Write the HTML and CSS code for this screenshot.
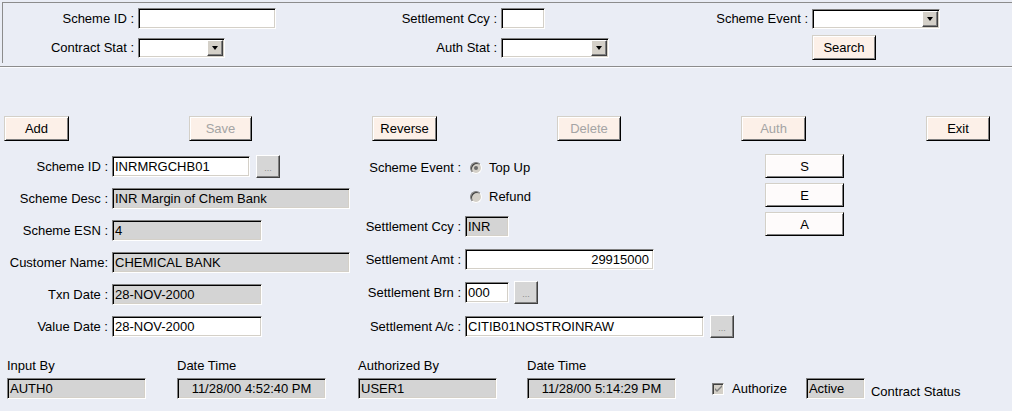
FILE: index.html
```html
<!DOCTYPE html>
<html>
<head>
<meta charset="utf-8">
<title>Margin Scheme</title>
<link rel="stylesheet" href="styles.css">
</head>
<body>
<div class="search-panel">
  <div class="sgroup g1">
    <div class="srow"><span class="slabel">Scheme ID :</span><span class="field w138"></span></div>
    <div class="srow tall"><span class="slabel">Contract Stat :</span><span class="select w87"><span class="arrow"></span></span></div>
  </div>
  <div class="sgroup g2">
    <div class="srow"><span class="slabel">Settlement Ccy :</span><span class="field w44"></span></div>
    <div class="srow tall"><span class="slabel">Auth Stat :</span><span class="select w108"><span class="arrow"></span></span></div>
  </div>
  <div class="sgroup g3">
    <div class="srow"><span class="slabel">Scheme Event :</span><span class="select w128"><span class="arrow"></span></span></div>
    <div class="srow tall"><span class="slabel"></span><span class="btn w64">Search</span></div>
  </div>
</div>
<div class="divider"></div>

<div class="actions">
  <span class="btn w65">Add</span>
  <span class="btn w63 disabled">Save</span>
  <span class="btn w65">Reverse</span>
  <span class="btn w64 disabled">Delete</span>
  <span class="btn w65 disabled">Auth</span>
  <span class="btn w64">Exit</span>
</div>

<div class="main">
  <div class="col left">
    <div class="row"><span class="label">Scheme ID :</span><span class="field w138">INRMRGCHB01</span><span class="lookup">...</span></div>
    <div class="row"><span class="label">Scheme Desc :</span><span class="field gray w238">INR Margin of Chem Bank</span></div>
    <div class="row"><span class="label">Scheme ESN :</span><span class="field gray w150">4</span></div>
    <div class="row"><span class="label">Customer Name:</span><span class="field gray w238">CHEMICAL BANK</span></div>
    <div class="row"><span class="label">Txn Date :</span><span class="field gray w150">28-NOV-2000</span></div>
    <div class="row"><span class="label">Value Date :</span><span class="field w150">28-NOV-2000</span></div>
  </div>
  <div class="col mid">
    <div class="row"><span class="label">Scheme Event :</span><span class="radio checked"></span><span class="opt">Top Up</span></div>
    <div class="row m8"><span class="label"></span><span class="radio"></span><span class="opt">Refund</span></div>
    <div class="row m9"><span class="label">Settlement Ccy :</span><span class="field gray w44">INR</span></div>
    <div class="row m12"><span class="label">Settlement Amt :</span><span class="field w189 num">29915000</span></div>
    <div class="row m12"><span class="label">Settlement Brn :</span><span class="field w44">000</span><span class="lookup">...</span></div>
    <div class="row m13"><span class="label">Settlement A/c :</span><span class="field w239">CITIB01NOSTROINRAW</span><span class="lookup l6">...</span></div>
  </div>
  <div class="col right">
    <span class="btn light w79">S</span>
    <span class="btn light w79">E</span>
    <span class="btn light w79">A</span>
  </div>
</div>

<div class="audit">
  <div class="agroup w139"><span class="alabel">Input By</span><span class="field gray">AUTH0</span></div>
  <div class="agroup w149 ml31"><span class="alabel">Date Time</span><span class="field gray center">11/28/00 4:52:40 PM</span></div>
  <div class="agroup w139 ml32"><span class="alabel">Authorized By</span><span class="field gray">USER1</span></div>
  <div class="agroup w149 ml30"><span class="alabel">Date Time</span><span class="field gray center">11/28/00 5:14:29 PM</span></div>
  <div class="authz">
    <span class="checkbox"><svg width="9" height="9" viewBox="0 0 9 9"><path d="M1 4 L3 6 L8 1 L8 3 L3 8 L1 6 Z" fill="#808080"/></svg></span>
    <span class="opt">Authorize</span>
  </div>
  <span class="field gray w59 active">Active</span>
  <span class="status">Contract Status</span>
</div>
</body>
</html>
```

FILE: styles.css
```css
* { box-sizing: border-box; }
html, body { margin: 0; padding: 0; }
body {
  width: 1012px;
  height: 411px;
  overflow: hidden;
  background: #eaedf5;
  font-family: "Liberation Sans", Arial, sans-serif;
  font-size: 13px;
  color: #000;
}

/* search panel */
.search-panel {
  margin: 2px 0 0 2px;
  height: 61px;
  border-top: 1px solid #8c8c8c;
  border-left: 1px solid #8c8c8c;
  padding-top: 5px;
  display: flex;
}
.sgroup { display: flex; flex-direction: column; gap: 6px; }
.g1 { width: 337px; }
.g2 { width: 340px; }
.g3 { flex: 1; }
.srow { display: flex; align-items: center; height: 21px; }
.srow.tall { height: 25px; }
.slabel { text-align: right; margin-right: 4px; white-space: nowrap; }
.g1 .slabel { width: 131px; }
.g2 .slabel { width: 157px; }
.g3 .slabel { width: 128px; }

.divider {
  margin-top: 3px;
  border-top: 1px solid #8c8c8c;
  border-bottom: 1px solid #fbfcff;
}

/* fields */
.field {
  display: block;
  height: 21px;
  background: #fff;
  border: 1px solid;
  border-color: #808080 #fff #fff #808080;
  box-shadow: inset 1px 1px 0 #000, inset -1px -1px 0 #d4d0c8;
  padding: 0 2px;
  line-height: 19px;
  white-space: nowrap;
  overflow: hidden;
}
.field.gray { background: #d4d4d4; }
.field.num { text-align: right; padding-right: 4px; }
.field.center { text-align: center; }

.select {
  display: flex;
  justify-content: flex-end;
  height: 20px;
  background: #fff;
  border: 1px solid;
  border-color: #808080 #fff #fff #808080;
  box-shadow: inset 1px 1px 0 #000, inset -1px -1px 0 #d4d0c8;
  padding: 1px;
}
.arrow {
  width: 16px;
  height: 100%;
  background: #d4d0c8;
  border: 1px solid;
  border-color: #fff #404040 #404040 #fff;
  box-shadow: inset -1px -1px 0 #808080;
  display: flex;
  align-items: center;
  justify-content: center;
}
.arrow::after {
  content: "";
  border-left: 3.5px solid transparent;
  border-right: 3.5px solid transparent;
  border-top: 4px solid #000;
}

/* buttons */
.btn {
  display: flex;
  align-items: center;
  justify-content: center;
  height: 25px;
  background: #fcf0e8;
  border: 1px solid;
  border-color: #d4d0c8 #000 #000 #d4d0c8;
  box-shadow: inset 1px 1px 0 #fff, inset -1px -1px 0 #808080;
  white-space: nowrap;
}
.btn.disabled { color: #a4a4a4; }
.btn.light { background: #fefbfb; height: 24px; }

.lookup {
  display: flex;
  align-items: flex-end;
  justify-content: center;
  width: 24px;
  height: 23px;
  margin-left: 5px;
  background: #d6d6d6;
  border: 1px solid;
  border-color: #fff #404040 #404040 #fff;
  box-shadow: inset -1px -1px 0 #808080;
  font-size: 9px;
  color: #8a8a8a;
  padding-bottom: 4px;
  letter-spacing: 0;
}
.lookup.l6 { margin-left: 6px; }

.actions {
  margin-top: 48px;
  padding-left: 4px;
  display: flex;
  gap: 120px;
}

/* main */
.main {
  margin-top: 13px;
  display: flex;
}
.col { display: flex; flex-direction: column; }
.left { width: 360px; padding-top: 2px; gap: 11px; }
.mid { width: 405px; padding-top: 3px; }
.right { gap: 5px; }
.row { display: flex; align-items: center; height: 21px; }
.left .row:first-child .lookup { margin-left: 6px; }
.label { text-align: right; margin-right: 4px; white-space: nowrap; }
.left .label { width: 108px; }
.mid .label { width: 101px; }
.m8 { margin-top: 8px; }
.m9 { margin-top: 9px; }
.m12 { margin-top: 12px; }
.m13 { margin-top: 13px; }

.radio {
  width: 12px;
  height: 12px;
  margin-left: 5px;
  border-radius: 50%;
  background: #d4d0c8;
  border: 1px solid;
  border-color: #808080 #fff #fff #808080;
  box-shadow: inset 1px 1px 0 #404040;
  display: flex;
  align-items: center;
  justify-content: center;
}
.radio.checked::after {
  content: "";
  width: 4px;
  height: 4px;
  border-radius: 50%;
  background: #6a6a6a;
}
.opt { margin-left: 7px; white-space: nowrap; }

/* audit row */
.audit {
  margin-top: 21px;
  padding-left: 7px;
  display: flex;
  align-items: flex-end;
}
.agroup { display: flex; flex-direction: column; }
.alabel { height: 15px; line-height: 15px; margin-bottom: 5px; white-space: nowrap; }
.authz {
  display: flex;
  align-items: center;
  height: 21px;
  margin-left: 36px;
}
.authz .opt { margin-left: 8px; }
.checkbox {
  width: 12px;
  height: 12px;
  background: #d4d0c8;
  border: 1px solid;
  border-color: #808080 #fff #fff #808080;
  box-shadow: inset 1px 1px 0 #404040;
  display: flex;
  align-items: center;
  justify-content: center;
}
.active { margin-left: 19px; }
.status { height: 21px; padding-top: 6px; line-height: 15px; margin-left: 6px; white-space: nowrap; }

/* widths */
.w44 { width: 44px; }
.w59 { width: 59px; }
.w63 { width: 63px; }
.w64 { width: 64px; }
.w65 { width: 65px; }
.w79 { width: 79px; }
.w87 { width: 87px; }
.w108 { width: 108px; }
.w128 { width: 128px; }
.w138 { width: 138px; }
.w139 { width: 139px; }
.w149 { width: 149px; }
.w150 { width: 150px; }
.w189 { width: 189px; }
.w238 { width: 238px; }
.w239 { width: 239px; }
.ml30 { margin-left: 30px; }
.ml31 { margin-left: 31px; }
.ml32 { margin-left: 32px; }
```
